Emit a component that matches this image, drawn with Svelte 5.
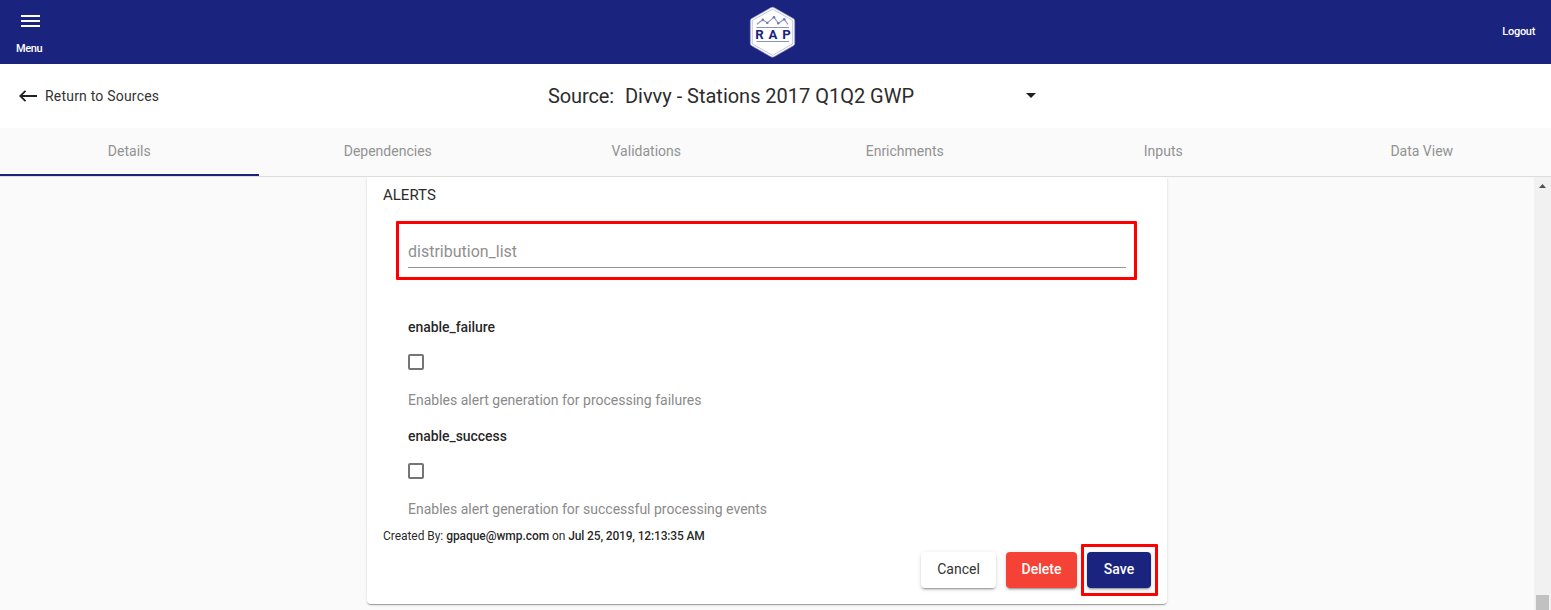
<script>
  const tabs = ['Details', 'Dependencies', 'Validations', 'Enrichments', 'Inputs', 'Data View'];
  const options = [
    { name: 'enable_failure', hint: 'Enables alert generation for processing failures' },
    { name: 'enable_success', hint: 'Enables alert generation for successful processing events' }
  ];
</script>

<div class="app">
  <header class="topbar">
    <button class="menu" aria-label="Menu">
      <svg width="24" height="24" viewBox="0 0 24 24"><path d="M3 18h19v-2H3v2zm0-5h19v-2H3v2zm0-7v2h19V6H3z" fill="#fff" /></svg>
      <span>Menu</span>
    </button>
    <svg class="logo" width="48" height="52" viewBox="0 0 48 52">
      <path d="M22 1.6Q23.5 .8 25 1.6L44.3 12.6Q45.7 13.4 45.7 15V37.4Q45.7 39 44.3 39.8L25 50.8Q23.5 51.6 22 50.8L2.7 39.8Q1.3 39 1.3 37.4V15Q1.3 13.4 2.7 12.6Z" fill="#fff" stroke="#8f94c5" stroke-width=".7" />
      <path d="M23.5 3.1L43.7 14.5V37.9L23.5 49.3L3.3 37.9V14.5Z" fill="none" stroke="#a9add0" stroke-width=".7" />
      <g fill="none" stroke="#8c92c0" stroke-width="1.1">
        <path d="M8 18.3L13.8 13.7L18.3 16.9L25 11.2L29.3 17.3L35.2 13.2L39 18.3" />
        <path d="M7.5 21.5H40M7.5 35.5H40" />
      </g>
      <g fill="#7279b0"><circle cx="13.8" cy="13.7" r="1.2" /><circle cx="18.3" cy="16.9" r="1.2" /><circle cx="25" cy="11.2" r="1.3" /><circle cx="29.3" cy="17.3" r="1.2" /><circle cx="35.2" cy="13.2" r="1.3" /></g>
      <text x="6.3" y="33" textLength="35.5" font-size="13.2" font-weight="700" fill="#1a237e">RAP</text>
    </svg>
    <span class="logout">Logout</span>
  </header>

  <div class="subbar">
    <div class="back">
      <svg width="18" height="12" viewBox="0 0 18 12" fill="none" stroke="#222" stroke-width="1.8"><path d="M1.3 6H18M6.5 .8L1.3 6L6.5 11.2" /></svg>
      <span>Return to Sources</span>
    </div>
    <div class="source">
      <span class="key">Source:</span>
      <span class="value">Divvy - Stations 2017 Q1Q2 GWP</span>
      <svg width="10" height="5" viewBox="0 0 10 5"><path d="M0 0h10L5 5z" fill="#1f1f1f" /></svg>
    </div>
  </div>

  <nav class="tabs">
    {#each tabs as tab, i}
      <div class="tab" class:active={i === 0}>{tab}</div>
    {/each}
  </nav>

  <div class="body">
    <main class="content">
      <section class="card">
        <h2>ALERTS</h2>
        <div class="marked field"><div class="input">distribution_list</div></div>
        <div class="options">
          {#each options as o}
            <div class="option">
              <div class="name">{o.name}</div>
              <div class="box"></div>
              <div class="hint">{o.hint}</div>
            </div>
          {/each}
        </div>
        <p class="created">Created By: <b>gpaque@wmp.com</b> on <b class="date">Jul 25, 2019, 12:13:35 AM</b></p>
        <div class="actions">
          <button class="btn cancel">Cancel</button>
          <button class="btn delete">Delete</button>
          <div class="marked frame"><button class="btn save">Save</button></div>
        </div>
      </section>
    </main>
    <div class="scrollbar">
      <svg width="7" height="4" viewBox="0 0 7 4"><path d="M0 4L3.5 0L7 4z" fill="#505050" /></svg>
      <div class="thumb"></div>
    </div>
  </div>
</div>

<style>
  :global(body) { margin: 0; overflow: hidden; }
  .app {
    height: 610px;
    display: flex;
    flex-direction: column;
    background: #fafafa;
    color: rgba(0, 0, 0, 0.87);
    font-family: Roboto, sans-serif;
    font-size: 14px;
    overflow: hidden;
  }
  .app * { box-sizing: border-box; }
  button { font-family: inherit; border: 0; padding: 0; }
  svg { display: block; flex: none; }

  .topbar {
    height: 64px;
    flex: none;
    display: grid;
    grid-template-columns: 749px 48px 1fr;
    background: #1a237e;
    color: #fff;
    font-size: 11px;
    font-weight: 500;
  }
  .menu {
    justify-self: start;
    display: flex;
    flex-direction: column;
    align-items: flex-start;
    gap: 9px;
    margin-left: 16px;
    padding-top: 9px;
    background: none;
    color: inherit;
    font-size: 11px;
    font-weight: 500;
    line-height: 14px;
  }
  .menu svg { margin-left: 2px; }
  .menu span { letter-spacing: -0.35px; }
  .logo { margin-top: 6px; }
  .logout { justify-self: end; margin: 25px 16px 0 0; line-height: 14px; letter-spacing: -0.3px; }

  .subbar {
    height: 64px;
    flex: none;
    display: grid;
    grid-template-columns: 548px auto 1fr;
    align-items: center;
    background: #fff;
  }
  .back { display: flex; align-items: center; gap: 8px; padding-left: 19px; letter-spacing: 0.2px; color: #333; }
  .source { display: flex; align-items: center; font-size: 20px; color: #2c2c2c; }
  .source svg { margin-top: -1px; }
  .key { width: 77px; letter-spacing: -0.1px; }
  .value { width: 401px; letter-spacing: -0.02px; }

  .tabs { height: 49px; flex: none; display: grid; grid-template-columns: repeat(6, 1fr); border-bottom: 1px solid #dcdcdc; }
  .tab { height: 48px; line-height: 46px; text-align: center; color: #929292; }
  .tab.active { border-bottom: 2px solid #1a237e; }

  .body { flex: 1; min-height: 0; display: flex; }
  .content { flex: 1; display: flex; justify-content: center; overflow: hidden; }
  .card {
    width: 800px;
    height: 427px;
    padding: 8px 16px 0;
    background: #fff;
    border-radius: 0 0 4px 4px;
    box-shadow: 0 2px 1px -1px rgba(0, 0, 0, 0.2), 0 1px 1px rgba(0, 0, 0, 0.14), 0 1px 3px rgba(0, 0, 0, 0.12);
  }
  h2 { margin: 0; font-size: 15px; font-weight: 400; line-height: 20px; color: #2c2c2c; }
  .marked { border: 3px solid #f00; border-radius: 1px; }
  .field { width: 741px; height: 59px; margin: 16px 0 0 13px; padding: 14px 8px 0 9px; }
  .input { height: 30px; border-bottom: 1px solid #949494; line-height: 27px; font-size: 16px; color: #8f8f8f; }
  .options { padding: 37px 25px 0; }
  .option { height: 109px; }
  .name { line-height: 20px; font-weight: 500; letter-spacing: -0.05px; }
  .box { width: 16px; height: 16px; margin-top: 17px; border: 2px solid #757575; border-radius: 2px; }
  .hint { margin-top: 20px; line-height: 20px; color: #8a8a8a; }
  .created { margin: -8px 0 0; height: 18px; line-height: 18px; font-size: 12px; letter-spacing: -0.05px; }
  .created b { font-weight: 500; }
  .created .date { letter-spacing: -0.16px; }
  .actions { display: flex; justify-content: flex-end; margin: -1px -7px 0 0; }
  .btn { height: 36px; border-radius: 4px; font-size: 14px; line-height: 34px; padding-bottom: 2px; color: #fff; font-weight: 500; box-shadow: 0 3px 1px -2px rgba(0, 0, 0, 0.2), 0 2px 2px rgba(0, 0, 0, 0.14), 0 1px 5px rgba(0, 0, 0, 0.12); }
  .cancel { width: 75px; margin: 8px 10px 0 0; background: #fff; color: #333; font-weight: 400; }
  .delete { width: 71px; margin: 8px 4px 0 0; background: #f44336; }
  .save { width: 64px; background: #1a237e; }
  .frame { width: 77px; height: 52px; padding: 5px 3px; }

  .scrollbar { width: 17px; display: flex; flex-direction: column; justify-content: space-between; align-items: center; background: #f1f1f1; padding-top: 7px; }
  .thumb { width: 13px; height: 15px; background: #c1c1c1; }
</style>
